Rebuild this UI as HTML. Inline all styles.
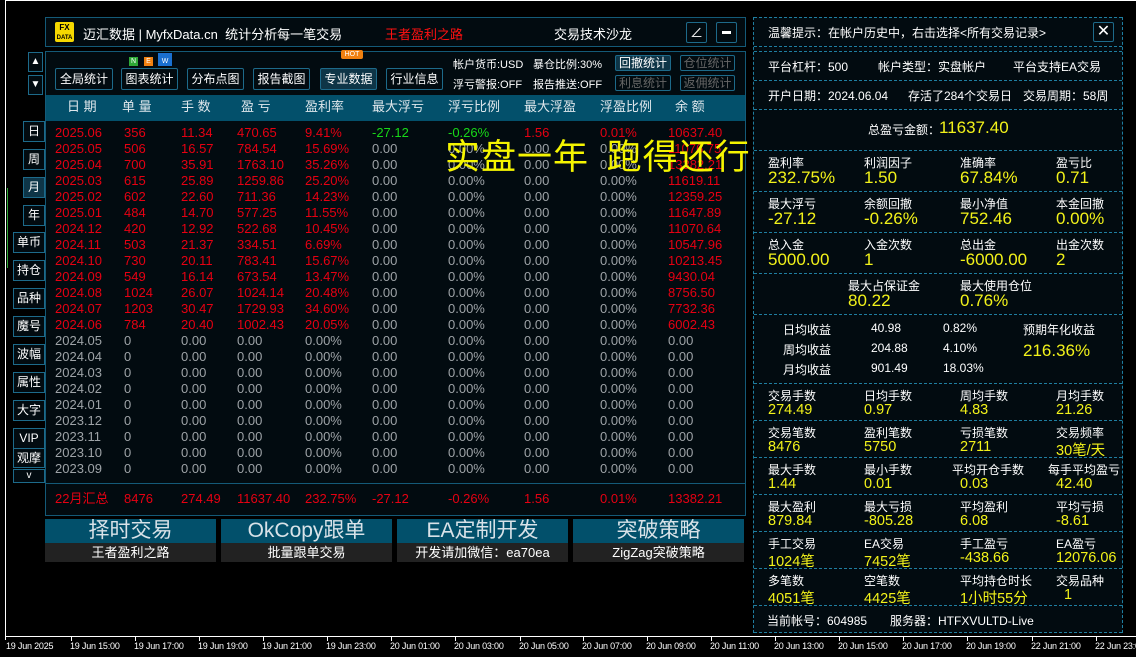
<!DOCTYPE html>
<html><head><meta charset="utf-8"><style>
*{margin:0;padding:0;box-sizing:border-box}
body{width:1136px;height:657px;background:#000;position:relative;overflow:hidden;font-family:"Liberation Sans","Noto Sans CJK SC",sans-serif;color:#fff;font-size:12px}
.a{position:absolute;white-space:nowrap}
.box{position:absolute;border:1px solid #145a78;background:#020b10}
.btn{position:absolute;border:1px solid #1d6a8a;background:#020b10;color:#fff;font-size:12px;text-align:center;border-radius:2px}
.row{position:absolute;left:55px;display:grid;grid-template-columns:69px 57px 56px 68px 67px 76px 76px 76px 68px 80px;font-size:13px;line-height:16px;height:16px}
.r{color:#e60012}.g{color:#9ea3a7}.gr{color:#18d818}
.hd span{color:#dfe7ec}
.dash{position:absolute;left:754px;width:368px;border-top:1px dashed #1f7ea0}
.lbl{position:absolute;font-size:12px;color:#fff;white-space:nowrap}
.val{position:absolute;font-size:17px;color:#f2f21a;white-space:nowrap}
.v2{position:absolute;font-size:14.5px;color:#f2f21a;white-space:nowrap}
.side{position:absolute;border:1px solid #1d6a8a;background:#020b10;color:#fff;text-align:center;font-size:12px}
.tk{position:absolute;top:637px;width:1px;height:4px;background:#fff}
.tl{position:absolute;top:641px;font-size:9px;color:#fff;white-space:nowrap;letter-spacing:-0.2px}
.tb{position:absolute;font-size:11px;white-space:nowrap}
</style></head><body>
<div class="a" style="left:5px;top:0;width:1131px;height:1px;background:#fff"></div>
<div class="a" style="left:5px;top:0;width:1px;height:640px;background:#fff"></div>

<!-- header -->
<div class="box" style="left:45px;top:17px;width:701px;height:30px"></div>
<div class="a" style="left:55px;top:22px;width:19px;height:20px;background:#f5d800;border-radius:2px;color:#000;font-size:8px;font-weight:bold;line-height:9px;text-align:center;padding-top:1px">FX<br><span style="font-size:6px">DATA</span></div>
<div class="a" style="left:83px;top:24px;font-size:13px">迈汇数据 | MyfxData.cn&nbsp; 统计分析每一笔交易</div>
<div class="a" style="left:385px;top:24px;font-size:13px;color:#ff1010">王者盈利之路</div>
<div class="a" style="left:554px;top:24px;font-size:13px">交易技术沙龙</div>
<div class="btn" style="left:686px;top:22px;width:21px;height:21px;font-size:13px;line-height:19px">∠</div>
<div class="btn" style="left:716px;top:22px;width:21px;height:21px"><div class="a" style="left:5px;top:8px;width:9px;height:3px;background:#fff"></div></div>

<!-- main box -->
<div class="box" style="left:45px;top:51px;width:701px;height:465px"></div>
<div class="btn" style="left:55px;top:68px;width:58px;height:22px;line-height:20px">全局统计</div>
<div class="btn" style="left:121px;top:68px;width:57px;height:22px;line-height:20px">图表统计</div>
<div class="btn" style="left:187px;top:68px;width:57px;height:22px;line-height:20px">分布点图</div>
<div class="btn" style="left:253px;top:68px;width:57px;height:22px;line-height:20px">报告截图</div>
<div class="btn" style="left:320px;top:68px;width:57px;height:22px;line-height:20px;background:#0e3547">专业数据</div>
<div class="btn" style="left:386px;top:68px;width:57px;height:22px;line-height:20px">行业信息</div>
<div class="a" style="left:129px;top:57px;width:9px;height:9px;background:#2ea836;font-size:7px;line-height:9px;text-align:center">N</div>
<div class="a" style="left:144px;top:57px;width:9px;height:9px;background:#f08010;font-size:7px;line-height:9px;text-align:center">E</div>
<div class="a" style="left:158px;top:53px;width:14px;height:13px;background:#1a70d0;font-size:7px;line-height:17px;text-align:center">W</div>
<div class="a" style="left:341px;top:50px;width:22px;height:9px;background:#f08010;font-size:7px;line-height:9px;text-align:center;border-radius:2px">HOT</div>
<div class="tb" style="left:453px;top:56px">帐户货币:USD</div>
<div class="tb" style="left:533px;top:56px">暴仓比例:30%</div>
<div class="tb" style="left:453px;top:76px">浮亏警报:OFF</div>
<div class="tb" style="left:533px;top:76px">报告推送:OFF</div>
<div class="btn" style="left:615px;top:55px;width:56px;height:16px;line-height:14px;background:#0e3547">回撤统计</div>
<div class="btn" style="left:680px;top:55px;width:55px;height:16px;line-height:14px;color:#666">仓位统计</div>
<div class="btn" style="left:615px;top:75px;width:56px;height:16px;line-height:14px;color:#666">利息统计</div>
<div class="btn" style="left:680px;top:75px;width:55px;height:16px;line-height:14px;color:#666">返佣统计</div>

<div class="a" style="left:46px;top:95px;width:699px;height:26px;background:#03506b"></div>
<div class="row hd" style="top:99px;left:67px;grid-template-columns:55px 59px 60px 64px 67px 76px 76px 76px 75px 60px"><span>日 期</span><span>单 量</span><span>手 数</span><span>盈 亏</span><span>盈利率</span><span>最大浮亏</span><span>浮亏比例</span><span>最大浮盈</span><span>浮盈比例</span><span>余 额</span></div>

<div class="row r" style="top:125px"><span>2025.06</span><span>356</span><span>11.34</span><span>470.65</span><span>9.41%</span><span class="gr">-27.12</span><span class="gr">-0.26%</span><span>1.56</span><span>0.01%</span><span>10637.40</span></div>
<div class="row r" style="top:141px"><span>2025.05</span><span>506</span><span>16.57</span><span>784.54</span><span>15.69%</span><span class="g">0.00</span><span class="g">0.00%</span><span class="g">0.00</span><span class="g">0.00%</span><span>11076.75</span></div>
<div class="row r" style="top:157px"><span>2025.04</span><span>700</span><span>35.91</span><span>1763.10</span><span>35.26%</span><span class="g">0.00</span><span class="g">0.00%</span><span class="g">0.00</span><span class="g">0.00%</span><span>13382.21</span></div>
<div class="row r" style="top:173px"><span>2025.03</span><span>615</span><span>25.89</span><span>1259.86</span><span>25.20%</span><span class="g">0.00</span><span class="g">0.00%</span><span class="g">0.00</span><span class="g">0.00%</span><span>11619.11</span></div>
<div class="row r" style="top:189px"><span>2025.02</span><span>602</span><span>22.60</span><span>711.36</span><span>14.23%</span><span class="g">0.00</span><span class="g">0.00%</span><span class="g">0.00</span><span class="g">0.00%</span><span>12359.25</span></div>
<div class="row r" style="top:205px"><span>2025.01</span><span>484</span><span>14.70</span><span>577.25</span><span>11.55%</span><span class="g">0.00</span><span class="g">0.00%</span><span class="g">0.00</span><span class="g">0.00%</span><span>11647.89</span></div>
<div class="row r" style="top:221px"><span>2024.12</span><span>420</span><span>12.92</span><span>522.68</span><span>10.45%</span><span class="g">0.00</span><span class="g">0.00%</span><span class="g">0.00</span><span class="g">0.00%</span><span>11070.64</span></div>
<div class="row r" style="top:237px"><span>2024.11</span><span>503</span><span>21.37</span><span>334.51</span><span>6.69%</span><span class="g">0.00</span><span class="g">0.00%</span><span class="g">0.00</span><span class="g">0.00%</span><span>10547.96</span></div>
<div class="row r" style="top:253px"><span>2024.10</span><span>730</span><span>20.11</span><span>783.41</span><span>15.67%</span><span class="g">0.00</span><span class="g">0.00%</span><span class="g">0.00</span><span class="g">0.00%</span><span>10213.45</span></div>
<div class="row r" style="top:269px"><span>2024.09</span><span>549</span><span>16.14</span><span>673.54</span><span>13.47%</span><span class="g">0.00</span><span class="g">0.00%</span><span class="g">0.00</span><span class="g">0.00%</span><span>9430.04</span></div>
<div class="row r" style="top:285px"><span>2024.08</span><span>1024</span><span>26.07</span><span>1024.14</span><span>20.48%</span><span class="g">0.00</span><span class="g">0.00%</span><span class="g">0.00</span><span class="g">0.00%</span><span>8756.50</span></div>
<div class="row r" style="top:301px"><span>2024.07</span><span>1203</span><span>30.47</span><span>1729.93</span><span>34.60%</span><span class="g">0.00</span><span class="g">0.00%</span><span class="g">0.00</span><span class="g">0.00%</span><span>7732.36</span></div>
<div class="row r" style="top:317px"><span>2024.06</span><span>784</span><span>20.40</span><span>1002.43</span><span>20.05%</span><span class="g">0.00</span><span class="g">0.00%</span><span class="g">0.00</span><span class="g">0.00%</span><span>6002.43</span></div>
<div class="row g" style="top:333px"><span>2024.05</span><span>0</span><span>0.00</span><span>0.00</span><span>0.00%</span><span>0.00</span><span>0.00%</span><span>0.00</span><span>0.00%</span><span>0.00</span></div>
<div class="row g" style="top:349px"><span>2024.04</span><span>0</span><span>0.00</span><span>0.00</span><span>0.00%</span><span>0.00</span><span>0.00%</span><span>0.00</span><span>0.00%</span><span>0.00</span></div>
<div class="row g" style="top:365px"><span>2024.03</span><span>0</span><span>0.00</span><span>0.00</span><span>0.00%</span><span>0.00</span><span>0.00%</span><span>0.00</span><span>0.00%</span><span>0.00</span></div>
<div class="row g" style="top:381px"><span>2024.02</span><span>0</span><span>0.00</span><span>0.00</span><span>0.00%</span><span>0.00</span><span>0.00%</span><span>0.00</span><span>0.00%</span><span>0.00</span></div>
<div class="row g" style="top:397px"><span>2024.01</span><span>0</span><span>0.00</span><span>0.00</span><span>0.00%</span><span>0.00</span><span>0.00%</span><span>0.00</span><span>0.00%</span><span>0.00</span></div>
<div class="row g" style="top:413px"><span>2023.12</span><span>0</span><span>0.00</span><span>0.00</span><span>0.00%</span><span>0.00</span><span>0.00%</span><span>0.00</span><span>0.00%</span><span>0.00</span></div>
<div class="row g" style="top:429px"><span>2023.11</span><span>0</span><span>0.00</span><span>0.00</span><span>0.00%</span><span>0.00</span><span>0.00%</span><span>0.00</span><span>0.00%</span><span>0.00</span></div>
<div class="row g" style="top:445px"><span>2023.10</span><span>0</span><span>0.00</span><span>0.00</span><span>0.00%</span><span>0.00</span><span>0.00%</span><span>0.00</span><span>0.00%</span><span>0.00</span></div>
<div class="row g" style="top:461px"><span>2023.09</span><span>0</span><span>0.00</span><span>0.00</span><span>0.00%</span><span>0.00</span><span>0.00%</span><span>0.00</span><span>0.00%</span><span>0.00</span></div>
<div class="a" style="left:46px;top:483px;width:699px;height:1px;background:#145a78"></div>
<div class="row r" style="top:491px"><span>22月汇总</span><span>8476</span><span>274.49</span><span>11637.40</span><span>232.75%</span><span>-27.12</span><span>-0.26%</span><span>1.56</span><span>0.01%</span><span>13382.21</span></div>

<div class="a" style="left:445px;top:133px;font-size:35px;line-height:44px;color:#f5f500;font-family:'Noto Sans CJK SC',sans-serif;letter-spacing:1px">实盘一年&nbsp; 跑得还行</div>

<!-- bottom buttons -->
<div class="a" style="left:45px;top:519px;width:171px;height:24px;background:#02506b;font-size:21px;line-height:24px;text-align:center;color:#d8e2e8">择时交易</div>
<div class="a" style="left:45px;top:543px;width:171px;height:19px;background:#222;font-size:13px;line-height:19px;text-align:center">王者盈利之路</div>
<div class="a" style="left:221px;top:519px;width:171px;height:24px;background:#02506b;font-size:21px;line-height:24px;text-align:center;color:#d8e2e8">OkCopy跟单</div>
<div class="a" style="left:221px;top:543px;width:171px;height:19px;background:#222;font-size:13px;line-height:19px;text-align:center">批量跟单交易</div>
<div class="a" style="left:397px;top:519px;width:171px;height:24px;background:#02506b;font-size:21px;line-height:24px;text-align:center;color:#d8e2e8">EA定制开发</div>
<div class="a" style="left:397px;top:543px;width:171px;height:19px;background:#222;font-size:13px;line-height:19px;text-align:center">开发请加微信：ea70ea</div>
<div class="a" style="left:573px;top:519px;width:171px;height:24px;background:#02506b;font-size:21px;line-height:24px;text-align:center;color:#d8e2e8">突破策略</div>
<div class="a" style="left:573px;top:543px;width:171px;height:19px;background:#222;font-size:13px;line-height:19px;text-align:center">ZigZag突破策略</div>

<!-- sidebar -->
<div class="side" style="left:28px;top:52px;width:15px;height:20px;line-height:18px;font-size:10px">▲</div>
<div class="side" style="left:28px;top:75px;width:15px;height:20px;line-height:18px;font-size:10px">▼</div>
<div class="side" style="left:23px;top:121px;width:22px;height:21px;line-height:19px">日</div>
<div class="side" style="left:23px;top:149px;width:22px;height:21px;line-height:19px">周</div>
<div class="side" style="left:23px;top:177px;width:22px;height:21px;line-height:19px;background:#0e3547">月</div>
<div class="side" style="left:23px;top:205px;width:22px;height:21px;line-height:19px">年</div>
<div class="side" style="left:13px;top:232px;width:32px;height:21px;line-height:19px">单币</div>
<div class="side" style="left:13px;top:260px;width:32px;height:21px;line-height:19px">持仓</div>
<div class="side" style="left:13px;top:288px;width:32px;height:21px;line-height:19px">品种</div>
<div class="side" style="left:13px;top:316px;width:32px;height:21px;line-height:19px">魔号</div>
<div class="side" style="left:13px;top:344px;width:32px;height:21px;line-height:19px">波幅</div>
<div class="side" style="left:13px;top:372px;width:32px;height:21px;line-height:19px">属性</div>
<div class="side" style="left:13px;top:400px;width:32px;height:21px;line-height:19px">大字</div>
<div class="side" style="left:13px;top:428px;width:32px;height:21px;line-height:19px">VIP</div>
<div class="side" style="left:13px;top:448px;width:32px;height:20px;line-height:18px">观摩</div>
<div class="side" style="left:13px;top:469px;width:32px;height:14px;line-height:12px;font-size:10px">v</div>
<div class="a" style="left:7px;top:188px;width:1px;height:80px;background:#2ea836"></div>

<!-- right panel -->
<div class="a" style="left:753px;top:17px;width:370px;height:616px;background:#020b10;border-left:1px dashed #1f7ea0;border-right:1px dashed #1f7ea0"></div>
<div class="dash" style="top:17px"></div><div class="dash" style="top:46px"></div>
<div class="dash" style="top:51px"></div><div class="dash" style="top:80px"></div>
<div class="dash" style="top:109px"></div><div class="dash" style="top:150px"></div>
<div class="dash" style="top:191px"></div><div class="dash" style="top:232px"></div>
<div class="dash" style="top:273px"></div><div class="dash" style="top:314px"></div>
<div class="dash" style="top:383px"></div><div class="dash" style="top:420px"></div>
<div class="dash" style="top:457px"></div><div class="dash" style="top:494px"></div>
<div class="dash" style="top:531px"></div><div class="dash" style="top:568px"></div>
<div class="dash" style="top:605px"></div><div class="dash" style="top:632px"></div>

<div class="lbl" style="left:768px;top:24px">温馨提示：在帐户历史中，右击选择&lt;所有交易记录&gt;</div>
<div class="btn" style="left:1093px;top:22px;width:21px;height:20px;font-size:16px;line-height:18px">✕</div>
<div class="lbl" style="left:768px;top:58px">平台杠杆：500</div>
<div class="lbl" style="left:878px;top:58px">帐户类型：实盘帐户</div>
<div class="lbl" style="left:1013px;top:58px">平台支持EA交易</div>
<div class="lbl" style="left:768px;top:87px">开户日期：2024.06.04</div>
<div class="lbl" style="left:908px;top:87px">存活了284个交易日</div>
<div class="lbl" style="left:1023px;top:87px">交易周期：58周</div>
<div class="lbl" style="left:868px;top:121px">总盈亏金额：</div>
<div class="val" style="left:939px;top:118px">11637.40</div>

<div class="lbl" style="left:768px;top:154px">盈利率</div><div class="lbl" style="left:864px;top:154px">利润因子</div><div class="lbl" style="left:960px;top:154px">准确率</div><div class="lbl" style="left:1056px;top:154px">盈亏比</div>
<div class="val" style="left:768px;top:168px">232.75%</div><div class="val" style="left:864px;top:168px">1.50</div><div class="val" style="left:960px;top:168px">67.84%</div><div class="val" style="left:1056px;top:168px">0.71</div>
<div class="lbl" style="left:768px;top:195px">最大浮亏</div><div class="lbl" style="left:864px;top:195px">余额回撤</div><div class="lbl" style="left:960px;top:195px">最小净值</div><div class="lbl" style="left:1056px;top:195px">本金回撤</div>
<div class="val" style="left:768px;top:209px">-27.12</div><div class="val" style="left:864px;top:209px">-0.26%</div><div class="val" style="left:960px;top:209px">752.46</div><div class="val" style="left:1056px;top:209px">0.00%</div>
<div class="lbl" style="left:768px;top:236px">总入金</div><div class="lbl" style="left:864px;top:236px">入金次数</div><div class="lbl" style="left:960px;top:236px">总出金</div><div class="lbl" style="left:1056px;top:236px">出金次数</div>
<div class="val" style="left:768px;top:250px">5000.00</div><div class="val" style="left:864px;top:250px">1</div><div class="val" style="left:960px;top:250px">-6000.00</div><div class="val" style="left:1056px;top:250px">2</div>
<div class="lbl" style="left:848px;top:277px">最大占保证金</div><div class="lbl" style="left:960px;top:277px">最大使用仓位</div>
<div class="val" style="left:848px;top:291px">80.22</div><div class="val" style="left:960px;top:291px">0.76%</div>

<div class="lbl" style="left:783px;top:321px">日均收益</div><div class="lbl" style="left:871px;top:321px">40.98</div><div class="lbl" style="left:943px;top:321px">0.82%</div><div class="lbl" style="left:1023px;top:321px">预期年化收益</div>
<div class="lbl" style="left:783px;top:341px">周均收益</div><div class="lbl" style="left:871px;top:341px">204.88</div><div class="lbl" style="left:943px;top:341px">4.10%</div>
<div class="lbl" style="left:783px;top:361px">月均收益</div><div class="lbl" style="left:871px;top:361px">901.49</div><div class="lbl" style="left:943px;top:361px">18.03%</div>
<div class="val" style="left:1023px;top:341px">216.36%</div>

<div class="lbl" style="left:768px;top:387px">交易手数</div><div class="lbl" style="left:864px;top:387px">日均手数</div><div class="lbl" style="left:960px;top:387px">周均手数</div><div class="lbl" style="left:1056px;top:387px">月均手数</div>
<div class="v2" style="left:768px;top:402px">274.49</div><div class="v2" style="left:864px;top:402px">0.97</div><div class="v2" style="left:960px;top:402px">4.83</div><div class="v2" style="left:1056px;top:402px">21.26</div>
<div class="lbl" style="left:768px;top:424px">交易笔数</div><div class="lbl" style="left:864px;top:424px">盈利笔数</div><div class="lbl" style="left:960px;top:424px">亏损笔数</div><div class="lbl" style="left:1056px;top:424px">交易频率</div>
<div class="v2" style="left:768px;top:439px">8476</div><div class="v2" style="left:864px;top:439px">5750</div><div class="v2" style="left:960px;top:439px">2711</div><div class="v2" style="left:1056px;top:439px">30笔/天</div>
<div class="lbl" style="left:768px;top:461px">最大手数</div><div class="lbl" style="left:864px;top:461px">最小手数</div><div class="lbl" style="left:952px;top:461px">平均开仓手数</div><div class="lbl" style="left:1048px;top:461px">每手平均盈亏</div>
<div class="v2" style="left:768px;top:476px">1.44</div><div class="v2" style="left:864px;top:476px">0.01</div><div class="v2" style="left:960px;top:476px">0.03</div><div class="v2" style="left:1056px;top:476px">42.40</div>
<div class="lbl" style="left:768px;top:498px">最大盈利</div><div class="lbl" style="left:864px;top:498px">最大亏损</div><div class="lbl" style="left:960px;top:498px">平均盈利</div><div class="lbl" style="left:1056px;top:498px">平均亏损</div>
<div class="v2" style="left:768px;top:513px">879.84</div><div class="v2" style="left:864px;top:513px">-805.28</div><div class="v2" style="left:960px;top:513px">6.08</div><div class="v2" style="left:1056px;top:513px">-8.61</div>
<div class="lbl" style="left:768px;top:535px">手工交易</div><div class="lbl" style="left:864px;top:535px">EA交易</div><div class="lbl" style="left:960px;top:535px">手工盈亏</div><div class="lbl" style="left:1056px;top:535px">EA盈亏</div>
<div class="v2" style="left:768px;top:550px">1024笔</div><div class="v2" style="left:864px;top:550px">7452笔</div><div class="v2" style="left:960px;top:550px">-438.66</div><div class="v2" style="left:1056px;top:550px">12076.06</div>
<div class="lbl" style="left:768px;top:572px">多笔数</div><div class="lbl" style="left:864px;top:572px">空笔数</div><div class="lbl" style="left:960px;top:572px">平均持仓时长</div><div class="lbl" style="left:1056px;top:572px">交易品种</div>
<div class="v2" style="left:768px;top:587px">4051笔</div><div class="v2" style="left:864px;top:587px">4425笔</div><div class="v2" style="left:960px;top:587px">1小时55分</div><div class="v2" style="left:1064px;top:587px">1</div>
<div class="lbl" style="left:767px;top:612px">当前帐号：604985</div><div class="lbl" style="left:890px;top:612px">服务器：HTFXVULTD-Live</div>

<!-- time axis -->
<div class="a" style="left:5px;top:636px;width:1131px;height:1px;background:#fff"></div>
<div class="tl" style="left:6px">19 Jun 2025</div>
<div class="tk" style="left:71px"></div><div class="tl" style="left:70px">19 Jun 15:00</div>
<div class="tk" style="left:135px"></div><div class="tl" style="left:134px">19 Jun 17:00</div>
<div class="tk" style="left:199px"></div><div class="tl" style="left:198px">19 Jun 19:00</div>
<div class="tk" style="left:263px"></div><div class="tl" style="left:262px">19 Jun 21:00</div>
<div class="tk" style="left:327px"></div><div class="tl" style="left:326px">19 Jun 23:00</div>
<div class="tk" style="left:391px"></div><div class="tl" style="left:390px">20 Jun 01:00</div>
<div class="tk" style="left:455px"></div><div class="tl" style="left:454px">20 Jun 03:00</div>
<div class="tk" style="left:520px"></div><div class="tl" style="left:519px">20 Jun 05:00</div>
<div class="tk" style="left:583px"></div><div class="tl" style="left:582px">20 Jun 07:00</div>
<div class="tk" style="left:647px"></div><div class="tl" style="left:646px">20 Jun 09:00</div>
<div class="tk" style="left:711px"></div><div class="tl" style="left:710px">20 Jun 11:00</div>
<div class="tk" style="left:775px"></div><div class="tl" style="left:774px">20 Jun 13:00</div>
<div class="tk" style="left:839px"></div><div class="tl" style="left:838px">20 Jun 15:00</div>
<div class="tk" style="left:903px"></div><div class="tl" style="left:902px">20 Jun 17:00</div>
<div class="tk" style="left:967px"></div><div class="tl" style="left:966px">20 Jun 19:00</div>
<div class="tk" style="left:1032px"></div><div class="tl" style="left:1031px">22 Jun 21:00</div>
<div class="tk" style="left:1096px"></div><div class="tl" style="left:1095px">22 Jun 23:00</div>
</body></html>
